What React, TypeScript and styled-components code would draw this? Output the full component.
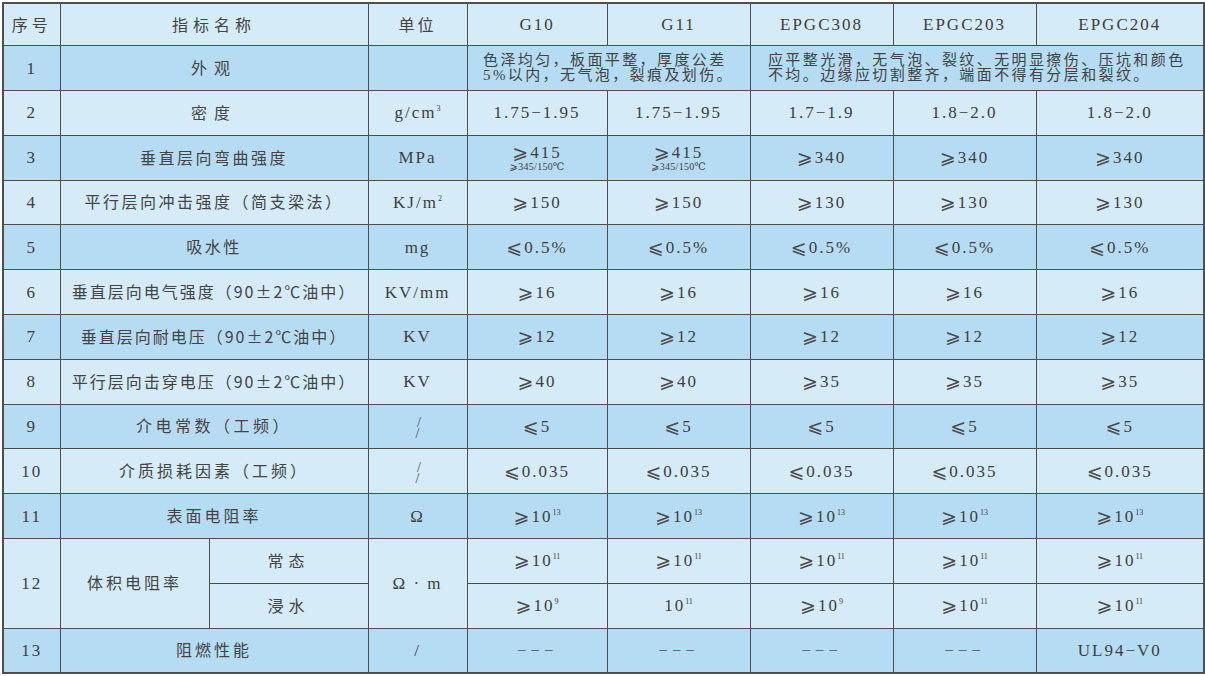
import React from 'react';
import styled, { createGlobalStyle } from 'styled-components';

const Global = createGlobalStyle`
  html, body { margin: 0; padding: 0; background: #ffffff; }
  body {
    font-family: "Liberation Serif", "DejaVu Serif", "Noto Sans CJK SC", serif;
    color: #3e3e3e;
  }
`;

const Wrap = styled.div`
  padding: 2px 0 0 2px;
`;

const Table = styled.table`
  border-collapse: collapse;
  table-layout: fixed;
  width: 1201px;
  border: 2px solid #4e4e4e;
`;

const Row = styled.tr<{ $dark?: boolean }>`
  background: ${(p) => (p.$dark ? '#b6dcf3' : '#d5ebf8')};
`;

const Cell = styled.td<{ $head?: boolean }>`
  border: 1.5px solid #4e4e4e;
  height: ${(p) => (p.$head ? '41.2px' : '43.8px')};
  padding: 0;
  text-align: center;
  vertical-align: middle;
  font-size: 17px;
  letter-spacing: 2px;
  line-height: 1;
  white-space: nowrap;
`;

const Zh = styled.span<{ $ls?: number; $size?: number }>`
  font-family: "Noto Sans CJK SC", sans-serif;
  font-size: ${(p) => p.$size ?? 16}px;
  letter-spacing: ${(p) => p.$ls ?? 2.5}px;
  color: #444444;
`;

const Desc = styled.div`
  display: inline-block;
  text-align: left;
  font-family: "Liberation Serif", "Noto Sans CJK SC", serif;
  font-size: 15px;
  letter-spacing: 2.4px;
  line-height: 15px;
  color: #424242;
  white-space: nowrap;
`;

const Sym = styled.span`
  font-family: "DejaVu Sans", "DejaVu Serif", serif;
  font-size: 19px;
  letter-spacing: 0;
  margin-right: 2px;
  color: #4a4a4a;
  vertical-align: -1px;
`;

const Sup = styled.sup`
  font-size: 8px;
  letter-spacing: 0;
  vertical-align: 7px;
  line-height: 0;
`;

const Stack = styled.div`
  display: inline-flex;
  flex-direction: column;
  align-items: center;
  line-height: 15px;
  padding-top: 2px;
`;

const Small = styled.span`
  display: block;
  font-size: 10px;
  line-height: 11px;
  letter-spacing: 0.3px;
  margin-top: 1px;
`;

const SmallSym = styled.span`
  font-family: "DejaVu Sans", serif;
  font-size: 10px;
`;

const SlashPair = styled.span`
  display: inline-flex;
  flex-direction: column;
  font-size: 14px;
  line-height: 11px;
  letter-spacing: 0;
  color: #4a4a4a;
  & > span:first-child { margin-left: 3px; }
`;

const Dashes = styled.span`
  letter-spacing: 4px;
  color: #555;
`;

const ge = (v: React.ReactNode) => (<><Sym>⩾</Sym>{v}</>);
const le = (v: React.ReactNode) => (<><Sym>⩽</Sym>{v}</>);
const pow = (b: string, e: string) => (<>{b}<Sup>{e}</Sup></>);
const slash2 = (<SlashPair><span>/</span><span>/</span></SlashPair>);
const dash = <Dashes>−−−</Dashes>;
const flex415 = (
  <Stack>
    <span>{ge('415')}</span>
    <Small><SmallSym>⩾</SmallSym>345/150℃</Small>
  </Stack>
);

type RowData = {
  no: string;
  name: React.ReactNode;
  unit: React.ReactNode;
  values: React.ReactNode[];
  dark: boolean;
};

const rows: RowData[] = [
  { no: '2', name: <Zh $ls={7}>密度</Zh>, unit: <>g/cm<Sup>3</Sup></>, values: ['1.75−1.95', '1.75−1.95', '1.7−1.9', '1.8−2.0', '1.8−2.0'], dark: false },
  { no: '3', name: <Zh>垂直层向弯曲强度</Zh>, unit: 'MPa', values: [flex415, flex415, ge('340'), ge('340'), ge('340')], dark: true },
  { no: '4', name: <Zh>平行层向冲击强度（简支梁法）</Zh>, unit: <>KJ/m<Sup>2</Sup></>, values: [ge('150'), ge('150'), ge('130'), ge('130'), ge('130')], dark: false },
  { no: '5', name: <Zh>吸水性</Zh>, unit: 'mg', values: [le('0.5%'), le('0.5%'), le('0.5%'), le('0.5%'), le('0.5%')], dark: true },
  { no: '6', name: <Zh $ls={2}>垂直层向电气强度（90±2℃油中）</Zh>, unit: 'KV/mm', values: [ge('16'), ge('16'), ge('16'), ge('16'), ge('16')], dark: false },
  { no: '7', name: <Zh $ls={2}>垂直层向耐电压（90±2℃油中）</Zh>, unit: 'KV', values: [ge('12'), ge('12'), ge('12'), ge('12'), ge('12')], dark: true },
  { no: '8', name: <Zh $ls={2}>平行层向击穿电压（90±2℃油中）</Zh>, unit: 'KV', values: [ge('40'), ge('40'), ge('35'), ge('35'), ge('35')], dark: false },
  { no: '9', name: <Zh $ls={3.5}>介电常数（工频）</Zh>, unit: slash2, values: [le('5'), le('5'), le('5'), le('5'), le('5')], dark: true },
  { no: '10', name: <Zh $ls={3}>介质损耗因素（工频）</Zh>, unit: slash2, values: [le('0.035'), le('0.035'), le('0.035'), le('0.035'), le('0.035')], dark: false },
  { no: '11', name: <Zh $ls={3}>表面电阻率</Zh>, unit: 'Ω', values: Array.from({ length: 5 }, () => ge(pow('10', '13'))), dark: true },
];

export default function App() {
  return (
    <Wrap>
      <Global />
      <Table>
        <colgroup>
          <col style={{ width: 57 }} />
          <col style={{ width: 149 }} />
          <col style={{ width: 159 }} />
          <col style={{ width: 99 }} />
          <col style={{ width: 140 }} />
          <col style={{ width: 143 }} />
          <col style={{ width: 143 }} />
          <col style={{ width: 143 }} />
          <col style={{ width: 168 }} />
        </colgroup>
        <tbody>
          <Row>
            <Cell $head><Zh $ls={4}>序号</Zh></Cell>
            <Cell $head colSpan={2}><Zh $ls={5}>指标名称</Zh></Cell>
            <Cell $head><Zh $ls={3}>单位</Zh></Cell>
            <Cell $head>G10</Cell>
            <Cell $head>G11</Cell>
            <Cell $head>EPGC308</Cell>
            <Cell $head>EPGC203</Cell>
            <Cell $head>EPGC204</Cell>
          </Row>
          <Row $dark>
            <Cell>1</Cell>
            <Cell colSpan={2}><Zh $ls={7}>外观</Zh></Cell>
            <Cell />
            <Cell colSpan={2}>
              <Desc>色泽均匀，板面平整，厚度公差<br />5%以内，无气泡，裂痕及划伤。</Desc>
            </Cell>
            <Cell colSpan={3}>
              <Desc>应平整光滑，无气泡、裂纹、无明显擦伤、压坑和颜色<br />不均。边缘应切割整齐，端面不得有分层和裂纹。</Desc>
            </Cell>
          </Row>
          {rows.map((r) => (
            <Row key={r.no} $dark={r.dark}>
              <Cell>{r.no}</Cell>
              <Cell colSpan={2}>{r.name}</Cell>
              <Cell>{r.unit}</Cell>
              {r.values.map((v, i) => (
                <Cell key={i}>{v}</Cell>
              ))}
            </Row>
          ))}
          <Row>
            <Cell rowSpan={2}>12</Cell>
            <Cell rowSpan={2}><Zh $ls={3}>体积电阻率</Zh></Cell>
            <Cell><Zh $ls={5}>常态</Zh></Cell>
            <Cell rowSpan={2}>Ω · m</Cell>
            {Array.from({ length: 5 }, (_, i) => (
              <Cell key={i}>{ge(pow('10', '11'))}</Cell>
            ))}
          </Row>
          <Row>
            <Cell><Zh $ls={5}>浸水</Zh></Cell>
            <Cell>{ge(pow('10', '9'))}</Cell>
            <Cell>{pow('10', '11')}</Cell>
            <Cell>{ge(pow('10', '9'))}</Cell>
            <Cell>{ge(pow('10', '11'))}</Cell>
            <Cell>{ge(pow('10', '11'))}</Cell>
          </Row>
          <Row $dark>
            <Cell>13</Cell>
            <Cell colSpan={2}><Zh $ls={3}>阻燃性能</Zh></Cell>
            <Cell>/</Cell>
            <Cell>{dash}</Cell>
            <Cell>{dash}</Cell>
            <Cell>{dash}</Cell>
            <Cell>{dash}</Cell>
            <Cell>UL94−V0</Cell>
          </Row>
        </tbody>
      </Table>
    </Wrap>
  );
}
